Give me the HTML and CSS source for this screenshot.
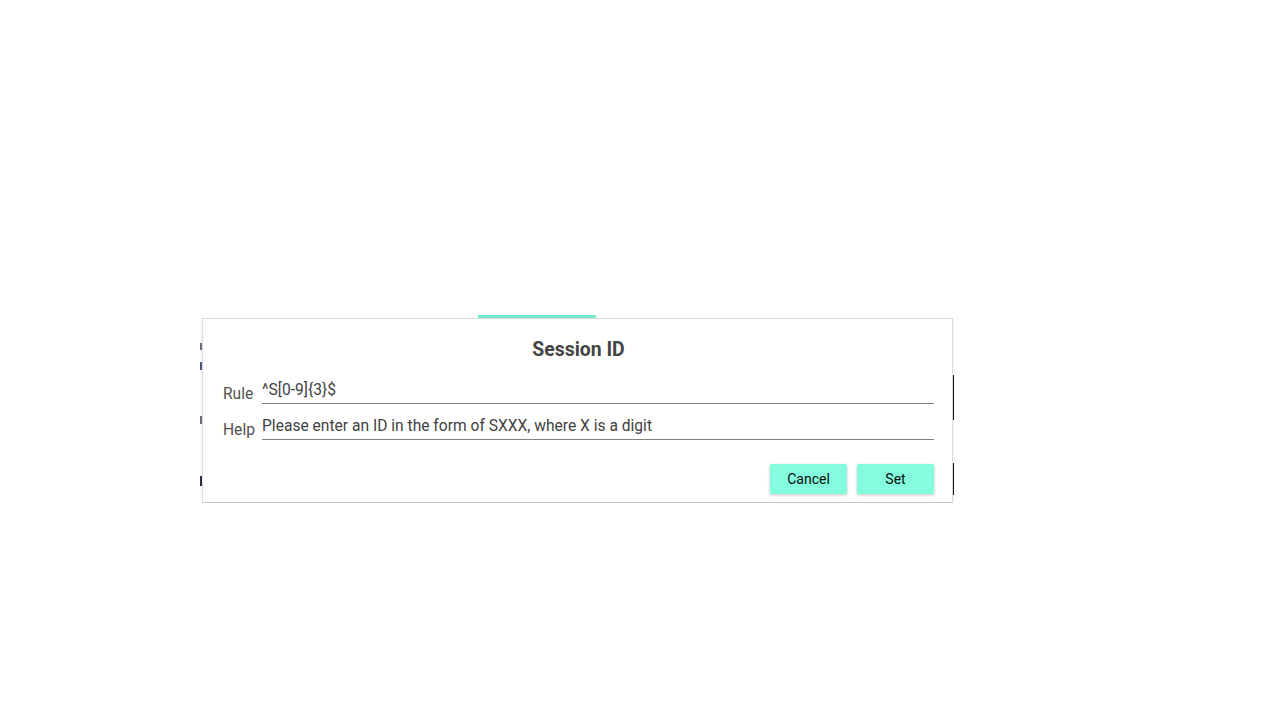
FILE: index.html
```html
<!DOCTYPE html>
<html>
<head>
<meta charset="utf-8">
<title>Session ID</title>
<link rel="stylesheet" href="styles.css">
</head>
<body>
<div class="stage">
  <div class="bg-bar bg-bar-top"></div>
  <div class="bg-bar bg-bar-bottom"></div>
  <div class="frag frag-l1"></div>
  <div class="frag frag-l2"></div>
  <div class="frag frag-l3"></div>
  <div class="frag frag-l4"></div>
  <div class="frag-dots"><span></span><span></span><span></span></div>
  <div class="frag frag-r1"></div>
  <div class="frag frag-r2"></div>

  <div class="dialog">
    <h2 class="dialog-title">Session ID</h2>
    <div class="field">
      <label class="field-label">Rule</label>
      <div class="field-input">^S[0-9]{3}$</div>
    </div>
    <div class="field">
      <label class="field-label">Help</label>
      <div class="field-input">Please enter an ID in the form of SXXX, where X is a digit</div>
    </div>
    <div class="actions">
      <button class="btn">Cancel</button>
      <button class="btn">Set</button>
    </div>
  </div>
</div>
</body>
</html>
```

FILE: styles.css
```css
html, body {
  margin: 0;
  padding: 0;
  background: #ffffff;
  font-family: Roboto, "Liberation Sans", sans-serif;
}

.stage {
  position: relative;
  margin-left: 200px;
  margin-top: 315px;
  width: 755px;
  padding-top: 3px;
}

.bg-bar {
  position: absolute;
  background: #74ecce;
}
.bg-bar-top {
  left: 278px;
  top: 0;
  width: 118px;
  height: 3px;
}
.bg-bar-bottom {
  left: 278px;
  top: 186px;
  width: 120px;
  height: 2px;
  background: #7bd9c0;
}

.frag {
  position: absolute;
  width: 2px;
  background: #444;
}
.frag-l1 { left: 0; top: 28px; height: 7px; background: #6a7080; }
.frag-l2 { left: 0; top: 47px; height: 8px; background: #4a5a86; }
.frag-l3 { left: 0; top: 101px; height: 8px; background: #6a6e7a; }
.frag-l4 { left: 0; top: 161px; height: 10px; background: #2a3046; }
.frag-r1 { left: 752px; top: 60px; height: 45px; background: #111; }
.frag-r2 { left: 752px; top: 148px; height: 32px; background: #111; }

.frag-dots {
  position: absolute;
  left: 751px;
  top: 12px;
  display: flex;
  flex-direction: column;
  gap: 2px;
}
.frag-dots span {
  width: 2px;
  height: 2px;
  background: #555;
}

.dialog {
  position: relative;
  margin-left: 2px;
  width: 751px;
  box-sizing: border-box;
  background: #fff;
  border: 1px solid #dcdcdc;
  border-bottom-color: #c8c8c8;
  box-shadow: 0 1px 3px rgba(0, 0, 0, 0.08);
  padding: 19px 18px 8px 20px;
  display: flex;
  flex-direction: column;
}

.dialog-title {
  margin: 0 0 16px;
  font-size: 19.4px;
  line-height: 24px;
  font-weight: 700;
  color: #444;
  text-align: center;
}

.field {
  display: flex;
  align-items: flex-end;
  gap: 8px;
  margin-bottom: 10px;
}

.field-label {
  width: 31px;
  font-size: 15.6px;
  line-height: 20px;
  color: #505050;
  flex: none;
}

.field-input {
  flex: 1;
  font-size: 15.6px;
  line-height: 20px;
  color: #424242;
  padding: 2px 0 3px;
  border-bottom: 1px solid #808080;
  white-space: nowrap;
}

.actions {
  display: flex;
  justify-content: flex-end;
  gap: 10px;
  margin-top: 14px;
}

.btn {
  width: 77px;
  height: 30px;
  border: none;
  border-radius: 2px;
  background: #84fddf;
  color: #0a0a0a;
  font-family: Roboto, "Liberation Sans", sans-serif;
  font-size: 14px;
  box-shadow: 0 1px 3px rgba(0, 0, 0, 0.25);
  padding: 0;
}
```
